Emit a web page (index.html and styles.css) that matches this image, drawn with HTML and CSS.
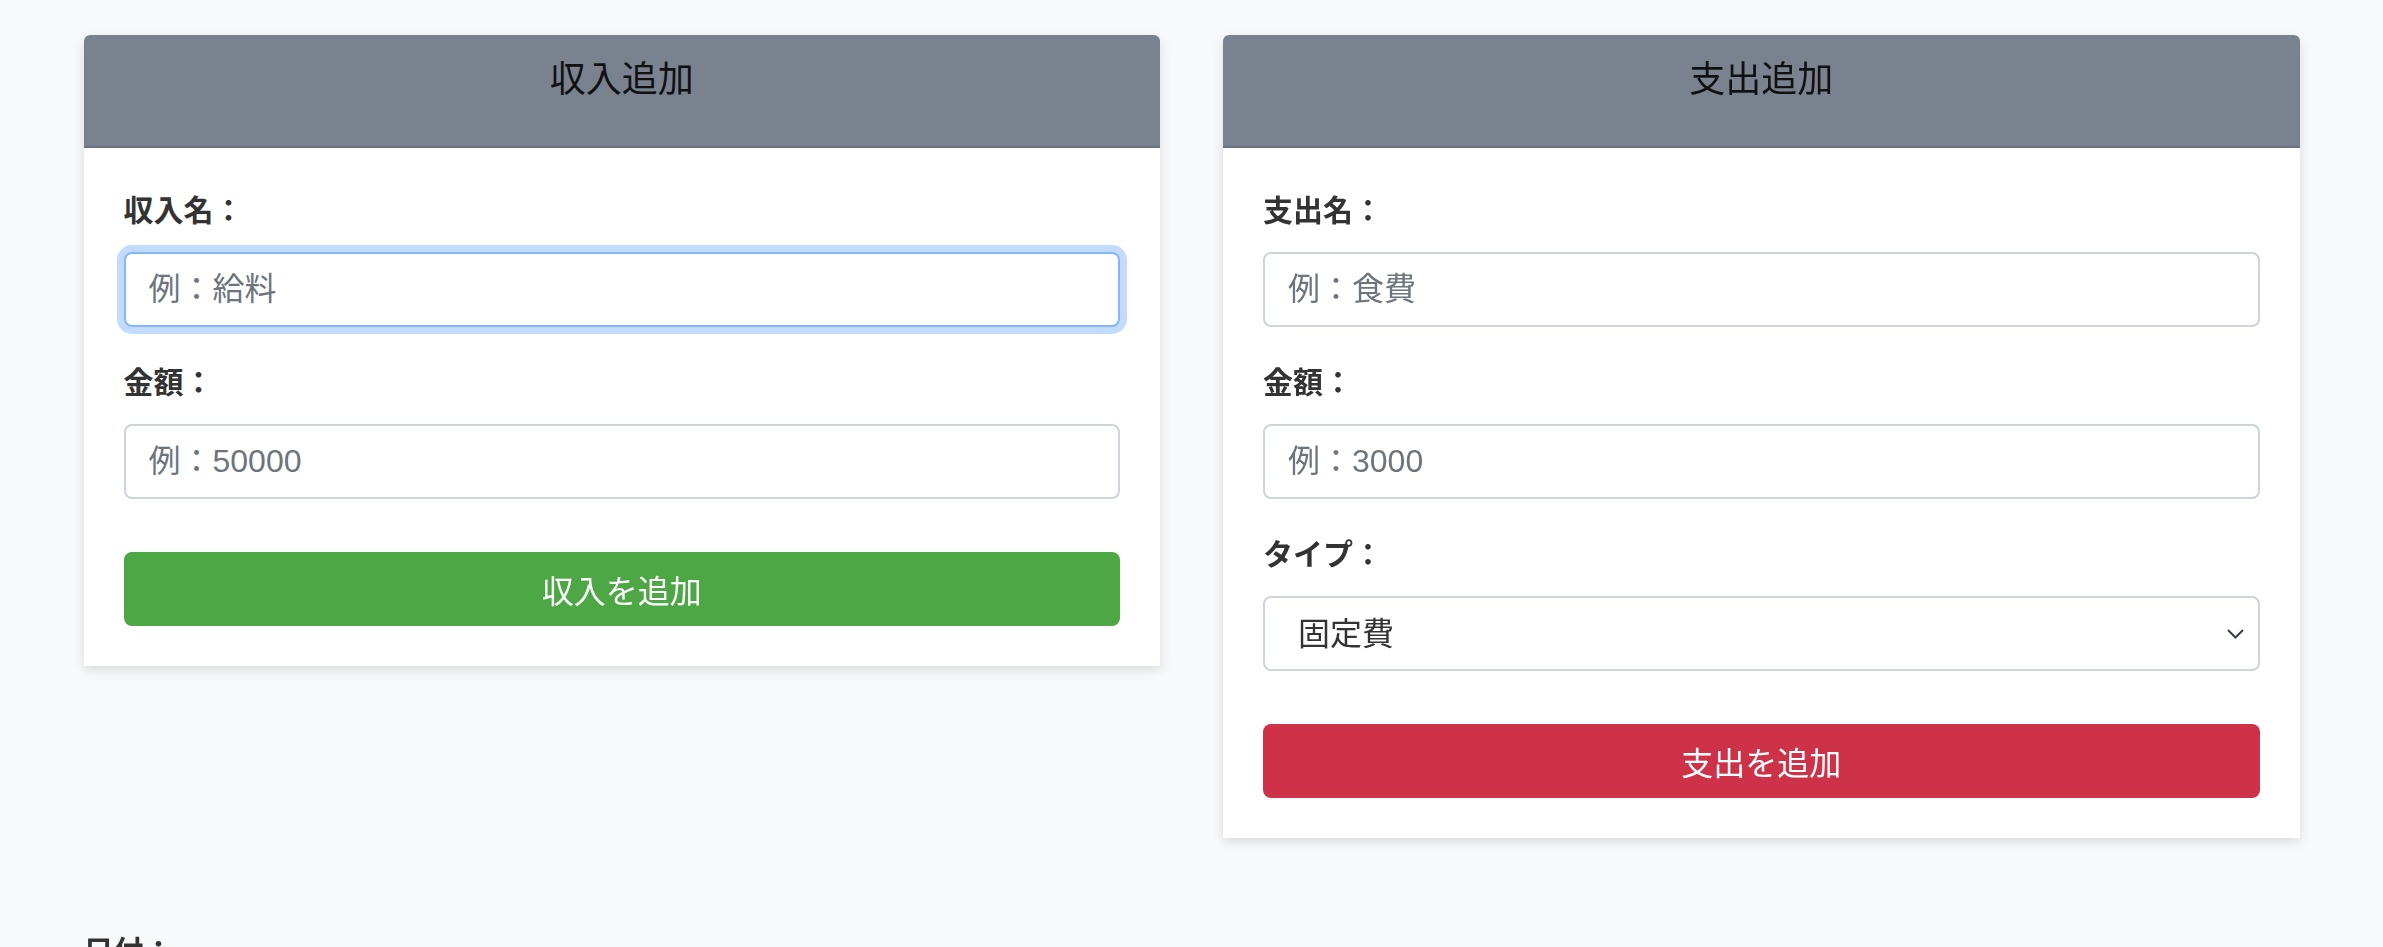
FILE: index.html
```html
<!DOCTYPE html>
<html lang="ja">
<head>
<meta charset="utf-8">
<title>収支管理</title>
<link rel="stylesheet" href="styles.css">
</head>
<body>
<main class="container">
  <div class="forms">
    <section class="card">
      <h2 class="card-header">収入追加</h2>
      <div class="card-body">
        <div class="group">
          <label class="label" for="income-name">収入名：</label>
          <input class="control focused" id="income-name" type="text" placeholder="例：給料" autofocus>
        </div>
        <div class="group">
          <label class="label" for="income-amount">金額：</label>
          <input class="control" id="income-amount" type="text" placeholder="例：50000">
        </div>
        <button class="btn btn-income" type="button">収入を追加</button>
      </div>
    </section>
    <section class="card">
      <h2 class="card-header">支出追加</h2>
      <div class="card-body">
        <div class="group">
          <label class="label" for="expense-name">支出名：</label>
          <input class="control" id="expense-name" type="text" placeholder="例：食費">
        </div>
        <div class="group">
          <label class="label" for="expense-amount">金額：</label>
          <input class="control" id="expense-amount" type="text" placeholder="例：3000">
        </div>
        <div class="group">
          <label class="label" for="expense-type">タイプ：</label>
          <div class="select-wrap">
            <select class="control select" id="expense-type">
              <option>固定費</option>
              <option>変動費</option>
            </select>
            <svg class="chevron" width="17" height="10" viewBox="0 0 17 10"><path d="M1 1 L8.5 8.5 L16 1" fill="none" stroke="#3a3f45" stroke-width="2"/></svg>
          </div>
        </div>
        <button class="btn btn-expense" type="button">支出を追加</button>
      </div>
    </section>
  </div>
  <div class="group">
    <label class="label" for="date">日付：</label>
  </div>
</main>
</body>
</html>
```

FILE: styles.css
```css
html, body {
  margin: 0;
  padding: 0;
}

body {
  background: #f8f9fa;
  font-family: "Liberation Sans", "Noto Sans CJK JP", sans-serif;
  color: #333;
}

.container {
  width: 2216px;
  margin: 0 auto;
  padding-top: 35px;
}

.forms {
  display: grid;
  grid-template-columns: 1fr 1fr;
  gap: 63px;
  align-items: start;
  margin-bottom: 91px;
}

.card {
  background: #fff;
  border-radius: 6px 6px 0 0;
  box-shadow: 0 4px 12px rgba(0, 0, 0, 0.12);
}

.card-header {
  margin: 0;
  height: 88px;
  padding-top: 23px;
  display: flex;
  align-items: flex-start;
  justify-content: center;
  background: #7a8290;
  border-bottom: 2px solid #6c737e;
  border-radius: 6px 6px 0 0;
  font-size: 36px;
  line-height: 43px;
  font-weight: 400;
  color: #111;
}

.card-body {
  padding: 40px;
  display: flex;
  flex-direction: column;
}

.group {
  display: flex;
  flex-direction: column;
  margin-bottom: 33px;
}

.label {
  font-size: 30px;
  font-weight: 700;
  line-height: 45px;
  margin-bottom: 19px;
  color: #333;
}

.control {
  box-sizing: border-box;
  width: 100%;
  height: 75px;
  border: 2px solid #ced4da;
  border-radius: 8px;
  padding: 0 23px;
  font-size: 32px;
  font-family: "Liberation Sans", "Noto Sans CJK JP", sans-serif;
  color: #212529;
  background: #fff;
  outline: none;
}

.control::placeholder {
  color: #6c757d;
}

.focused {
  border-color: #86b7fe;
  box-shadow: 0 0 0 7px rgba(13, 110, 253, 0.25);
}

.select-wrap {
  position: relative;
}

.select {
  appearance: none;
  -webkit-appearance: none;
  padding-left: 33px;
  color: #333;
}

.chevron {
  position: absolute;
  right: 16px;
  top: 33px;
  pointer-events: none;
}

.btn {
  margin-top: 20px;
  height: 74px;
  border: 0;
  border-radius: 8px;
  color: #fff;
  font-size: 32px;
  font-family: "Liberation Sans", "Noto Sans CJK JP", sans-serif;
  cursor: pointer;
}

.btn-income {
  background: #4ca744;
}

.btn-expense {
  background: #ce3249;
}
```
